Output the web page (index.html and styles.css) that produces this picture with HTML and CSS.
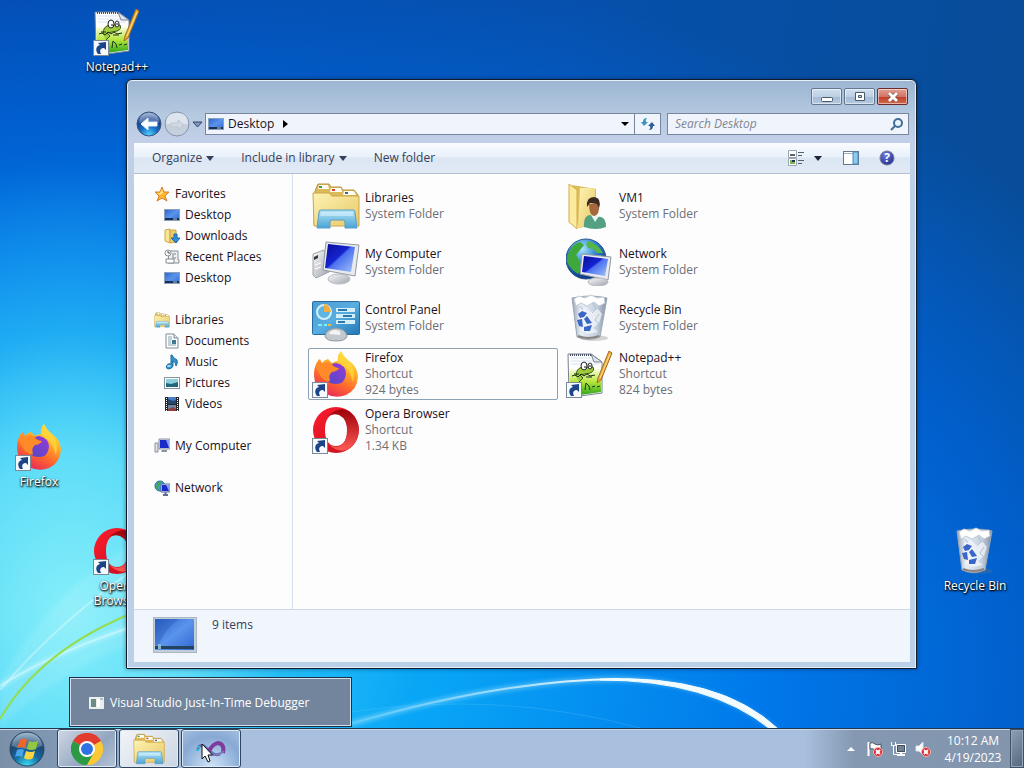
FILE: index.html
```html
<!DOCTYPE html>
<html lang="en">
<head>
    <meta charset="UTF-8">
    <meta name="viewport" content="width=device-width, initial-scale=1.0">
    <title>Desktop</title>
    <link rel="stylesheet" href="styles.css">
</head>
<body>
    <!-- shared icons -->
    <svg class="sprite" width="0" height="0" aria-hidden="true">
        <defs>
            <linearGradient id="g-folder" x1="0" y1="0" x2="1" y2="1">
                <stop offset="0" stop-color="#fdf3b4"/><stop offset="1" stop-color="#e8c864"/>
            </linearGradient>
            <linearGradient id="g-stand" x1="0" y1="0" x2="0" y2="1">
                <stop offset="0" stop-color="#b4e4f6"/><stop offset="1" stop-color="#4aa3d6"/>
            </linearGradient>
            <linearGradient id="g-screen" x1="0" y1="0" x2="1" y2="1">
                <stop offset="0" stop-color="#0a0a9c"/><stop offset=".45" stop-color="#1524cf"/><stop offset=".5" stop-color="#4b70ee"/><stop offset="1" stop-color="#a3c4fb"/>
            </linearGradient>
            <linearGradient id="g-blue" x1="0" y1="0" x2="1" y2="1">
                <stop offset="0" stop-color="#2c64c8"/><stop offset=".5" stop-color="#5a94ec"/><stop offset="1" stop-color="#2f68d0"/>
            </linearGradient>
            <linearGradient id="g-metal" x1="0" y1="0" x2="1" y2="1">
                <stop offset="0" stop-color="#fafafa"/><stop offset="1" stop-color="#9fa4ad"/>
            </linearGradient>
            <linearGradient id="g-panel" x1="0" y1="0" x2="1" y2="1">
                <stop offset="0" stop-color="#4a9bd2"/><stop offset=".5" stop-color="#58aee0"/><stop offset="1" stop-color="#2176b4"/>
            </linearGradient>
            <radialGradient id="g-globe" cx=".4" cy=".25" r=".8">
                <stop offset="0" stop-color="#a7e6fa"/><stop offset=".45" stop-color="#2f83d0"/><stop offset="1" stop-color="#0a2a78"/>
            </radialGradient>
            <linearGradient id="g-bin" x1="0" y1="0" x2="1" y2="0">
                <stop offset="0" stop-color="#9aa5b3"/><stop offset=".25" stop-color="#e6edf5"/><stop offset=".7" stop-color="#c3d0df"/><stop offset="1" stop-color="#8391a3"/>
            </linearGradient>
            <linearGradient id="g-fox" x1=".8" y1="0" x2=".3" y2="1">
                <stop offset="0" stop-color="#fff044"/><stop offset=".35" stop-color="#ffb02a"/><stop offset=".65" stop-color="#ff6a2c"/><stop offset="1" stop-color="#e8245c"/>
            </linearGradient>
            <linearGradient id="g-foxcore" x1="1" y1="0" x2="0" y2="1">
                <stop offset="0" stop-color="#9838d8"/><stop offset="1" stop-color="#4c4cc4"/>
            </linearGradient>
            <linearGradient id="g-opera" x1="0" y1="0" x2="1" y2="1">
                <stop offset="0" stop-color="#ff1b2d"/><stop offset="1" stop-color="#c0101f"/>
            </linearGradient>
            <linearGradient id="g-opera2" x1="0" y1="0" x2="0" y2="1">
                <stop offset="0" stop-color="#9c0009"/><stop offset="1" stop-color="#ff5a54"/>
            </linearGradient>
            <linearGradient id="g-grass" x1="0" y1="0" x2="0" y2="1">
                <stop offset="0" stop-color="#fbfde0"/><stop offset=".5" stop-color="#b4e63a"/><stop offset="1" stop-color="#2ca41c"/>
            </linearGradient>
            <radialGradient id="g-back" cx=".5" cy=".95" r=".9">
                <stop offset="0" stop-color="#4fd2ff"/><stop offset=".4" stop-color="#1a70c4"/><stop offset=".75" stop-color="#1a3f8c"/><stop offset="1" stop-color="#7d9cc8"/>
            </radialGradient>
            <radialGradient id="g-orb" cx=".5" cy="1" r="1">
                <stop offset="0" stop-color="#3fe0f8"/><stop offset=".4" stop-color="#15699f"/><stop offset=".7" stop-color="#1c4670"/><stop offset="1" stop-color="#86a9c6"/>
            </radialGradient>
            <radialGradient id="g-help" cx=".4" cy=".3" r=".8">
                <stop offset="0" stop-color="#6e7fe0"/><stop offset="1" stop-color="#1c2886"/>
            </radialGradient>
        </defs>

        <symbol id="i-arrow" viewBox="0 0 16 16">
            <rect x=".5" y=".5" width="15" height="15" fill="#f6f9fd" stroke="#7b8896"/>
            <path d="M5 14C2 10 3 6 7 5L5 3 13 2V10L11 8C8 8 6 10 8 14Z" fill="#1c4486"/>
        </symbol>

        <symbol id="i-libraries" viewBox="0 0 48 48">
            <path d="M3 9 6 2H17L19 5H29L31 8H42L46 13V43H2Z" fill="#dcb95a" stroke="#b8923a"/>
            <path d="M7 3H16L17 7H6ZM19 6H29L30 10H18ZM32 9H42L44 13H31Z" fill="#fffef4"/>
            <path d="M7 4H10V6H7Z" fill="#3e9c44"/><path d="M20 7H23V9H20Z" fill="#d8442c"/><path d="M33 10H36V12H33Z" fill="#34679c"/>
            <path d="M1 11H17L20 14H47V44H2Z" fill="url(#g-folder)" stroke="#cba64b"/>
            <path d="M7 30Q7 28 9 28H41Q43 28 43 30L45 46H33V40Q33 38 31 38H20Q18 38 18 40V46H5Z" fill="url(#g-stand)" stroke="#5a9ec4"/>
            <path d="M9 30H41V34H8Z" fill="#e4f8ff" opacity=".5"/>
        </symbol>

        <symbol id="i-user" viewBox="0 0 48 48">
            <path d="M6 3 30 7V43L12 46Z" fill="#e0bc58"/>
            <path d="M14 6 29 6V42L12 46Z" fill="url(#g-folder)"/>
            <path d="M3 2 11 8V47L3 40Z" fill="#fbeb9c" stroke="#d2ad4c"/>
            <path d="M18 45Q17 33 25 33L31 35Q40 33 40 45Q30 49 18 45Z" fill="#53a083"/>
            <path d="M25 33 29 40 33 34Z" fill="#e8f5ec"/>
            <path d="M23 22Q23 33 28 34 34 33 33 22Z" fill="#a4683c"/>
            <path d="M21 25Q20 15 28 15 36 16 33 26L31 22 24 21Z" fill="#3a2a20"/>
        </symbol>

        <symbol id="i-computer" viewBox="0 0 48 48">
            <path d="M1 16 12 12 17 34 4 40 1 37Z" fill="url(#g-metal)" stroke="#a0a5ad"/>
            <path d="M2 19 6 17V20L2 22Z" fill="#33373d"/><path d="M3 27 9 25M3 31 9 29" stroke="#fff"/>
            <path d="M14 4 47 7 43 38 11 32Z" fill="#e7eaee" stroke="#9298a2"/>
            <path d="M16 6 43 9 39 34 13 30Z" fill="url(#g-screen)"/>
            <path d="M24 36H32L33 40H22Z" fill="#b9bec6"/>
            <ellipse cx="27" cy="41" rx="11" ry="5" fill="url(#g-metal)" stroke="#b6bbc3"/>
        </symbol>

        <symbol id="i-network" viewBox="0 0 48 48">
            <circle cx="20" cy="21" r="20" fill="url(#g-globe)" stroke="#2c568e"/>
            <path d="M6 9Q9 5 14 4L18 7 14 12 10 17 13 22 16 30 12 36Q4 31 1 24 1 15 6 9Z" fill="#3fa83a"/>
            <path d="M23 3Q33 7 37 15L31 15 27 11 22 10 20 6Z" fill="#56b548"/>
            <path d="M16 16 45 19 42 42 14 36Z" fill="#e7eaee" stroke="#9298a2"/>
            <path d="M18 18 42 21 39 38 16 34Z" fill="url(#g-screen)"/>
            <ellipse cx="32" cy="44" rx="10" ry="4" fill="url(#g-metal)" stroke="#b6bbc3"/>
        </symbol>

        <symbol id="i-control" viewBox="0 0 48 48">
            <rect x=".5" y="7.500" width="47" height="33" rx="1" fill="url(#g-panel)" stroke="#2a6ca0"/>
            <circle cx="12" cy="18" r="7" fill="#5eb6e4" stroke="#d5f0fc" stroke-width="2"/>
            <path d="M12 18V10A8 8 0 0 1 19 18Z" fill="#f0ad42"/>
            <path d="M6 31H10M12 31H15" stroke="#7ff2ff" stroke-width="2"/><path d="M16 31H19" stroke="#f0b84f" stroke-width="2"/>
            <path d="M24 16H43M24 22H43M24 28H43" stroke="#d4effc" stroke-width="4"/>
            <path d="M26 16H35M31 22H40M26 28H33" stroke="#2b78ad" stroke-width="2"/>
            <path d="M13 42Q14 35 24 34 34 35 35 42 34 47 24 47 14 47 13 42Z" fill="#c3c9ce" stroke="#8e979e"/>
            <path d="M17 40Q18 36 24 36 30 37 28 41Z" fill="#f4f4f2"/>
        </symbol>

        <symbol id="i-bin" viewBox="0 0 48 48">
            <ellipse cx="28" cy="44" rx="14" ry="3" fill="#777" opacity=".3"/>
            <path d="M6 4 11 43Q22 48 34 43L41 4Q24 0 6 4Z" fill="url(#g-bin)" stroke="#9aa7b6"/>
            <path d="M8 5 13 2 19 4 25 1 31 4 38 3 39 9 33 12 28 8 21 12 15 9 10 12Z" fill="#fff" stroke="#c4ccd5"/>
            <path d="M13 16 20 13 25 18 32 15 36 20 33 29 27 34 32 38 22 40 14 36 18 31 12 27Z" fill="#f5f8fb" opacity=".7"/>
            <path d="M27 9 30 15 26 19M33 20 29 26 34 31M14 12 17 16" fill="none" stroke="#b4c0cf"/>
            <path d="M12 20 16 17 21 19 18 23 14 24ZM21 22 26 29 21 30 18 25ZM11 26 16 25 17 33 13 32ZM18 33 26 31 24 37 18 37Z" fill="#3a66c8"/>
            <path d="M12 42Q22 46 33 42" fill="none" stroke="#8a817c" stroke-width="2"/>
        </symbol>

        <symbol id="i-firefox" viewBox="0 0 48 48">
            <path d="M2 24Q2 16 7 9L10 13Q12 10 16 9L20 13Q23 11 26 11 25 5 29 1 31 6 36 10 46 17 46 27 45 40 34 45 24 49 14 44 2 38 2 24Z" fill="url(#g-fox)"/>
            <path d="M13 24Q14 14 24 13 34 15 34 24 33 34 24 34 14 34 13 24Z" fill="url(#g-foxcore)"/>
            <path d="M4 17 8 9 10 14Q16 11 20 14 21 17 27 18 26 21 20 22 16 25 18 31 12 32 8 25Z" fill="#ff8a28"/>
            <path d="M26 11Q30 3 29 1 32 8 38 13 44 20 41 32 37 17 30 15Z" fill="#ffd83c" opacity=".75"/>
        </symbol>

        <symbol id="i-notepad" viewBox="0 0 48 48">
            <path d="M2 4H25L36 12V43L14 46H3Z" fill="#fff" stroke="#778294"/>
            <path d="M5 8H25M5 11H28M5 14H33" stroke="#d5e2f0"/>
            <path d="M3 19H35V42L14 45H4Z" fill="url(#g-grass)"/>
            <path d="M4 5H25" stroke="#455062" stroke-width="2" stroke-dasharray="1 1"/>
            <path d="M25 4 28 12H36Z" fill="#dfe5ee" stroke="#778294"/>
            <path d="M10 26Q10 18 17 17L27 17Q29 21 24 23L14 25 17 28 13 32" fill="#a0cc3c" stroke="#33591a"/>
            <path d="M6 26 9 25 12 27 15 24 18 26 21 24 24 26 29 25M8 24 13 24M20 27H26" fill="none" stroke="#172d12"/>
            <ellipse cx="18" cy="16" rx="3" ry="4" fill="#fff" stroke="#222"/><ellipse cx="24" cy="16" rx="2" ry="3" fill="#fff" stroke="#222"/>
            <path d="M19 16V18M24 15V17" stroke="#111"/>
            <path d="M19 40 20 33 23 36 24 40M26 37 29 36M31 37 34 36" fill="none" stroke="#183b16"/>
            <path d="M46 3 43 1 32 28 31 33 35 30Z" fill="#e9ad3a" stroke="#a56c22"/>
            <path d="M44 4 34 28" stroke="#ffe18b"/>
        </symbol>

        <symbol id="i-opera" viewBox="0 0 48 48">
            <path d="M24 1A23 23 0 1 0 24 47A23 23 0 1 0 24 1ZM24 8C32 8 35 15 35 24S32 40 24 40 13 33 13 24 16 8 24 8Z" fill="url(#g-opera)" fill-rule="evenodd"/>
            <path d="M16 10Q28 -1 38 6A23 23 0 0 1 38 42Q28 49 16 38 30 46 35 30 37 14 27 9 21 7 16 10Z" fill="url(#g-opera2)"/>
        </symbol>

        <symbol id="i-desktop" viewBox="0 0 16 16">
            <rect x=".5" y="2.500" width="15" height="11" fill="url(#g-blue)" stroke="#8aa0bb"/>
            <path d="M1 11H15V13H1Z" fill="#1b3050"/><path d="M9 12H13" stroke="#a9c9e8"/>
        </symbol>

        <symbol id="i-star" viewBox="0 0 16 16">
            <path d="M8 1 10 6 15 6 11 10 13 15 8 12 3 15 5 10 1 6 6 6Z" fill="#ffb62c" stroke="#d97c28" stroke-linejoin="round"/>
            <path d="M8 3 9 7 6 9 3 7 6 7Z" fill="#ffe68c"/>
        </symbol>

        <symbol id="i-downloads" viewBox="0 0 16 16">
            <path d="M1 2 6 1V15L1 13Z" fill="#f8e596" stroke="#cfa947"/><path d="M6 2H12V14L6 15Z" fill="#ebcb68" stroke="#cfa947"/>
            <path d="M10 6H13V10H16L12 15 7 10H10Z" fill="#2f8de0" stroke="#1d66ac"/>
        </symbol>

        <symbol id="i-recent" viewBox="0 0 16 16">
            <path d="M5 2H14V11H15V14H4Z" fill="#f0f1f2" stroke="#858c92"/>
            <path d="M2 10H10V14H2Z" fill="#fff" stroke="#858c92"/>
            <path d="M8 5H12M8 7H10M8 9H12" stroke="#75818c"/>
            <circle cx="4" cy="4" r="3" fill="#fff" stroke="#8d949b"/><path d="M4 2V4H6" fill="none" stroke="#555"/>
        </symbol>

        <symbol id="i-document" viewBox="0 0 16 16">
            <path d="M2 1H10L14 5V15H2Z" fill="#fff" stroke="#7f8c94"/>
            <path d="M4 4H8M4 6H8M4 8H7M4 10H7M4 12H12" stroke="#89a0ad"/><path d="M8 7H12V11H8Z" fill="#3b7898"/><path d="M10 1V5H14" fill="#dce6ed" stroke="#7f8c94"/>
        </symbol>

        <symbol id="i-music" viewBox="0 0 16 16">
            <path d="M8 1Q9 4 13 6 14 9 12 12 12 8 9 7V12Q8 15 4 15 1 14 3 11 5 9 7 10V1Z" fill="#2f94cb" stroke="#1d6c9f"/>
            <ellipse cx="5" cy="12" rx="2" ry="1" fill="#a8e4f7"/>
        </symbol>

        <symbol id="i-picture" viewBox="0 0 16 16">
            <rect x=".5" y="2.500" width="15" height="11" fill="#fff" stroke="#8795a0"/>
            <path d="M2 4H14V12H2Z" fill="#8fd0dd"/><path d="M2 8 7 9 14 7V12H2Z" fill="#23677d"/>
        </symbol>

        <symbol id="i-video" viewBox="0 0 16 16">
            <path d="M1 1H15V15H1Z" fill="#23272c"/><path d="M4 1H12V8H4Z" fill="#467cc1"/><path d="M4 9H12V15H4Z" fill="#6a88a6"/>
            <path d="M4 3 9 5 12 4V8H4Z" fill="#26466a"/><path d="M4 13 9 11 12 13V15H4Z" fill="#8f3f3b"/>
            <path d="M2.500 2V15M13.500 2V15" stroke="#fff" stroke-dasharray="1 1"/>
        </symbol>

        <symbol id="i-pin-computer" viewBox="0 0 16 16">
            <path d="M1 5H4V14H1Z" fill="#dfe3e6" stroke="#8a9198"/><path d="M5 1H16V11H5Z" fill="#dfe3ea" stroke="#8990a0"/>
            <path d="M6 2H15V10H6Z" fill="#1a2ac8"/><path d="M12 2H15V10Z" fill="#7f9ef4"/><path d="M8 12H13V14H7Z" fill="#8e949c"/>
        </symbol>

        <symbol id="i-pin-network" viewBox="0 0 16 16">
            <circle cx="6" cy="6" r="5" fill="#3f9ad9" stroke="#28679e"/><path d="M3 3 7 1 6 5 4 7 6 10 2 8Z" fill="#43ab46"/>
            <path d="M7 4H16V12H7Z" fill="#dce1ea" stroke="#5e6c9f"/><path d="M8 5H15V11H8Z" fill="#1a2ac8"/><path d="M12 5H15V11Z" fill="#7f9ef4"/><path d="M9 15H14M11.500 12V14" stroke="#5c6f91" stroke-width="2"/>
        </symbol>

        <symbol id="i-chrome" viewBox="0 0 32 32">
            <path d="M16 16 2.100 8A16 16 0 0 1 29.900 8Z" fill="#e33b2e"/>
            <path d="M16 16 29.900 8A16 16 0 0 1 16 32Z" fill="#fcc934"/>
            <path d="M16 16V32A16 16 0 0 1 2.100 8Z" fill="#2c9a45"/>
            <path d="M16 8H29.900Q28 5 25 3 20 0 16 0Z" fill="#e33b2e"/>
            <path d="M23 20 16 32Q11 32 9 30L16 20Z" fill="#2c9a45"/><path d="M23 20 16 32Q22 32 25 29L27 16Z" fill="#fcc934"/>
            <circle cx="16" cy="16" r="8" fill="#fff"/><circle cx="16" cy="16" r="6" fill="#2f72e6"/>
        </symbol>
    </svg>

    <main class="desktop">
        <svg class="wallpaper" viewBox="0 0 1024 728" preserveAspectRatio="none" aria-hidden="true">
            <defs>
                <filter id="soft"><feGaussianBlur stdDeviation="2"/></filter>
                <linearGradient id="g-swoosh" x1="0" x2="1">
                    <stop offset="0" stop-color="#fff" stop-opacity=".1"/><stop offset=".6" stop-color="#e8fbff" stop-opacity=".6"/><stop offset="1" stop-color="#fff"/>
                </linearGradient>
            </defs>
            <path d="M0 682Q50 590 140 540L140 640Q60 670 0 728Z" fill="#fff" opacity=".1" filter="url(#soft)"/>
            <path d="M0 690Q60 620 140 565" fill="none" stroke="#fff" stroke-width="2" opacity=".35"/>
            <path d="M0 686Q60 648 160 618" fill="none" stroke="#d9fbff" stroke-width="4" opacity=".5" filter="url(#soft)"/>
            <path d="M0 686Q60 648 160 618" fill="none" stroke="#d9fbff" stroke-width="2" opacity=".5"/>
            <path d="M0 719Q40 650 135 612" fill="none" stroke="#95dc4e" stroke-width="2"/>
            <path d="M350 724Q500 680 620 679 720 682 778 732" fill="none" stroke="#bff0ff" stroke-width="5" opacity=".4" filter="url(#soft)"/>
            <path d="M350 724Q500 680 620 679" fill="none" stroke="url(#g-swoosh)" stroke-width="2"/>
            <path d="M600 679Q720 674 778 729L770 729Q710 680 600 680Z" fill="#f2fcff" stroke="#f2fcff"/>
            <path d="M350 712Q500 690 640 728" fill="none" stroke="#7fd6ff" opacity=".2"/>
        </svg>

        <a class="shortcut shortcut-notepad" href="#">
            <span class="pic"><svg><use href="#i-notepad"/></svg><svg class="link"><use href="#i-arrow"/></svg></span>
            <span class="shortcut-label">Notepad++</span>
        </a>
        <a class="shortcut shortcut-firefox" href="#">
            <span class="pic"><svg><use href="#i-firefox"/></svg><svg class="link"><use href="#i-arrow"/></svg></span>
            <span class="shortcut-label">Firefox</span>
        </a>
        <a class="shortcut shortcut-opera" href="#">
            <span class="pic"><svg><use href="#i-opera"/></svg><svg class="link"><use href="#i-arrow"/></svg></span>
            <span class="shortcut-label">Opera Browser</span>
        </a>
        <a class="shortcut shortcut-bin" href="#">
            <span class="pic"><svg><use href="#i-bin"/></svg></span>
            <span class="shortcut-label">Recycle Bin</span>
        </a>

        <section class="window" aria-label="Desktop">
            <div class="caption">
                <button class="caption-button" aria-label="Minimize"><svg width="14" height="10"><rect x="1.500" y="5.500" width="11" height="4" rx="1" fill="#fff" stroke="#4a586c"/></svg></button>
                <button class="caption-button" aria-label="Maximize"><svg width="12" height="10"><path d="M1.500.500H10.500V8.500H1.500ZM4.500 3.500V5.500H7.500V3.500Z" fill="#fff" fill-rule="evenodd" stroke="#4a586c"/></svg></button>
                <button class="caption-button close" aria-label="Close"><svg width="14" height="10"><path d="M3 1 11 9M11 1 3 9" stroke="#6a4040" stroke-width="4"/><path d="M3 1 11 9M11 1 3 9" stroke="#fff" stroke-width="3"/></svg></button>
            </div>

            <div class="address-row">
                <div class="travel">
                    <button class="round" aria-label="Back"><svg viewBox="0 0 26 26"><circle cx="13" cy="13" r="12" fill="url(#g-back)" stroke="#3c5478"/><path d="M3 12Q3 3 13 2 23 3 23 12 13 8 3 12Z" fill="#fff" opacity=".3"/><path d="M5 13 12 7V11H21V15H12V19Z" fill="#fff" stroke="#dff1ff"/></svg></button>
                    <button class="round" aria-label="Forward"><svg viewBox="0 0 26 26"><circle cx="13" cy="13" r="12" fill="#c6d0dd" stroke="#8593a8"/><path d="M2 13Q2 2 13 2 24 2 24 13Z" fill="#dde4ed"/><path d="M20 14 14 9V12H7V16H14V19Z" fill="#d0d8e2" stroke="#bcc6d2"/></svg></button>
                    <button class="recent" aria-label="Recent pages"><svg width="11" height="7"><path d="M1 1H10L5.500 6Z" fill="#7d97b9" stroke="#34496c"/></svg></button>
                </div>
                <div class="address">
                    <svg class="small"><use href="#i-desktop"/></svg>
                    <a class="crumb" href="#">Desktop</a>
                    <svg width="5" height="8"><path d="M0 0 5 4 0 8Z" fill="#000"/></svg>
                    <button class="history" aria-label="Previous locations"><svg width="8" height="4"><path d="M0 0H8L4 4Z" fill="#000"/></svg></button>
                </div>
                <button class="refresh" aria-label="Refresh"><svg width="16" height="16"><path d="M7 2Q3 2 3 6H1L4 10 8 6H6Q5 4 7 2Z" fill="#3c93c0"/><path d="M9 14Q13 14 13 10H15L12 6 8 10H10Q11 12 9 14Z" fill="#2d5f94"/></svg></button>
                <div class="search">
                    <input type="text" aria-label="Search Desktop" placeholder="Search Desktop">
                    <svg width="13" height="13"><circle cx="8" cy="5" r="4" fill="#eaf4fc" stroke="#3f6d96" stroke-width="2"/><path d="M5 8 1 12" stroke="#3f6d96" stroke-width="2"/></svg>
                </div>
            </div>

            <div class="client">
                <div class="commands">
                    <button class="command">Organize <svg width="8" height="5"><path d="M0 0H8L4 5Z" fill="#36405a"/></svg></button>
                    <button class="command">Include in library <svg width="8" height="5"><path d="M0 0H8L4 5Z" fill="#36405a"/></svg></button>
                    <button class="command">New folder</button>
                    <div class="tools">
                        <button class="tool" aria-label="Change your view"><svg width="16" height="16"><path d="M.500.500H8.500V7.500H.500ZM.500 8.500H8.500V15.500H.500Z" fill="#fff" stroke="#9aa5b1"/><path d="M2 5H7" stroke="#576570" stroke-width="2"/><path d="M2 10H7V14H2Z" fill="#7db356"/><path d="M4 11H7" stroke="#20324e" stroke-width="2"/><path d="M10 2.500H16M10 5.500H14M10 10.500H16M10 13.500H14" stroke="#4f6273"/></svg></button>
                        <button class="tool more" aria-label="More options"><svg width="8" height="5"><path d="M0 0H8L4 5Z" fill="#1c2638"/></svg></button>
                        <button class="tool preview" aria-label="Preview pane"><svg width="16" height="14"><rect x=".5" y=".5" width="15" height="13" fill="#fff" stroke="#63788d"/><path d="M1 2.500H10" stroke="#9fb2c3"/><path d="M10 1H15V13H10Z" fill="#8ccaf0" stroke="#4b86b6"/></svg></button>
                        <button class="tool help" aria-label="Help"><svg width="16" height="16"><circle cx="8" cy="8" r="7" fill="url(#g-help)" stroke="#767e9c"/><text x="8" y="12" text-anchor="middle">?</text></svg></button>
                    </div>
                </div>

                <div class="panes">
                    <nav class="tree" aria-label="Navigation pane">
                        <ul>
                            <li><a href="#"><svg class="small"><use href="#i-star"/></svg>Favorites</a>
                                <ul>
                                    <li><a href="#"><svg class="small"><use href="#i-desktop"/></svg>Desktop</a></li>
                                    <li><a href="#"><svg class="small"><use href="#i-downloads"/></svg>Downloads</a></li>
                                    <li><a href="#"><svg class="small"><use href="#i-recent"/></svg>Recent Places</a></li>
                                    <li><a href="#"><svg class="small"><use href="#i-desktop"/></svg>Desktop</a></li>
                                </ul>
                            </li>
                            <li><a href="#"><svg class="small"><use href="#i-libraries"/></svg>Libraries</a>
                                <ul>
                                    <li><a href="#"><svg class="small"><use href="#i-document"/></svg>Documents</a></li>
                                    <li><a href="#"><svg class="small"><use href="#i-music"/></svg>Music</a></li>
                                    <li><a href="#"><svg class="small"><use href="#i-picture"/></svg>Pictures</a></li>
                                    <li><a href="#"><svg class="small"><use href="#i-video"/></svg>Videos</a></li>
                                </ul>
                            </li>
                            <li><a href="#"><svg class="small"><use href="#i-pin-computer"/></svg>My Computer</a></li>
                            <li><a href="#"><svg class="small"><use href="#i-pin-network"/></svg>Network</a></li>
                        </ul>
                    </nav>

                    <div class="files">
                        <a class="file" href="#"><span class="pic"><svg><use href="#i-libraries"/></svg></span><span class="info"><b>Libraries</b><span>System Folder</span></span></a>
                        <a class="file" href="#"><span class="pic"><svg><use href="#i-user"/></svg></span><span class="info"><b>VM1</b><span>System Folder</span></span></a>
                        <a class="file" href="#"><span class="pic"><svg><use href="#i-computer"/></svg></span><span class="info"><b>My Computer</b><span>System Folder</span></span></a>
                        <a class="file" href="#"><span class="pic"><svg><use href="#i-network"/></svg></span><span class="info"><b>Network</b><span>System Folder</span></span></a>
                        <a class="file" href="#"><span class="pic"><svg><use href="#i-control"/></svg></span><span class="info"><b>Control Panel</b><span>System Folder</span></span></a>
                        <a class="file" href="#"><span class="pic"><svg><use href="#i-bin"/></svg></span><span class="info"><b>Recycle Bin</b><span>System Folder</span></span></a>
                        <a class="file focused" href="#"><span class="pic"><svg><use href="#i-firefox"/></svg><svg class="link"><use href="#i-arrow"/></svg></span><span class="info"><b>Firefox</b><span>Shortcut</span><span>924 bytes</span></span></a>
                        <a class="file" href="#"><span class="pic"><svg><use href="#i-notepad"/></svg><svg class="link"><use href="#i-arrow"/></svg></span><span class="info"><b>Notepad++</b><span>Shortcut</span><span>824 bytes</span></span></a>
                        <a class="file" href="#"><span class="pic"><svg><use href="#i-opera"/></svg><svg class="link"><use href="#i-arrow"/></svg></span><span class="info"><b>Opera Browser</b><span>Shortcut</span><span>1.34 KB</span></span></a>
                    </div>
                </div>

                <div class="details">
                    <svg width="44" height="36"><rect x=".5" y=".5" width="43" height="35" fill="#c3ced8" stroke="#aab8c6"/><path d="M2 2H41V33H2Z" fill="url(#g-blue)"/><path d="M2 2H26Q10 14 6 28H2Z" fill="#16419e" opacity=".25"/><path d="M2 29H41V32H2Z" fill="#24435f"/><path d="M5 27H8V32H5Z" fill="#8db4ce"/></svg>
                    <span>9 items</span>
                </div>
            </div>
        </section>

        <div class="task-preview">
            <svg width="15" height="12"><rect width="15" height="12" fill="#e9efee"/><path d="M2 2H7V10H2Z" fill="#6b8d86"/><path d="M8 2H11V10H8Z" fill="#fff"/><path d="M11 1H14V3H11Z" fill="#b3bfc4"/></svg>
            <span>Visual Studio Just-In-Time Debugger</span>
        </div>
    </main>

    <footer class="taskbar">
        <button class="start" aria-label="Start">
            <svg viewBox="0 0 36 36">
                <circle cx="18" cy="18" r="17" fill="url(#g-orb)" stroke="#2b4560"/>
                <path d="M3 15Q5 2 18 2 31 2 33 15 18 21 3 15Z" fill="#fff" opacity=".25"/>
                <path d="M11 9Q15 6 18 9L16 17Q12 15 8 17Z" fill="#f0652a"/>
                <path d="M20 10Q24 12 29 10L27 18Q22 20 18 18Z" fill="#93c83e"/>
                <path d="M8 19Q12 17 15 19L13 26Q9 24 6 26Z" fill="#4aa4ea"/>
                <path d="M17 20Q22 22 26 20L24 27Q20 30 15 27Z" fill="#fdd544"/>
            </svg>
        </button>
        <button class="task" aria-label="Google Chrome"><svg width="32" height="32"><use href="#i-chrome"/></svg></button>
        <button class="task open" aria-label="Windows Explorer"><svg width="34" height="32"><use href="#i-libraries"/></svg></button>
        <button class="task hot" aria-label="Visual Studio Just-In-Time Debugger">
            <svg width="32" height="32" viewBox="0 0 32 32"><path d="M3 16Q4 11 9 13L16 19Q20 23 25 21" fill="none" stroke="#5976b8" stroke-width="3"/><path d="M13 20Q17 11 23 10 30 11 28 20" fill="none" stroke="#7e3d9c" stroke-width="4"/><path d="M13 20Q20 25 29 18" fill="none" stroke="#7c76bc" stroke-width="2"/><path d="M2 14H5M1 17H4" stroke="#2fb8d5" stroke-width="2"/></svg>
        </button>
        <div class="tray">
            <button class="tray-button up" aria-label="Show hidden icons"><svg width="8" height="4"><path d="M0 4 4 0 8 4Z" fill="#fff"/></svg></button>
            <button class="tray-button" aria-label="Action Center"><svg width="16" height="16"><path d="M1.500 1V15" stroke="#fff" stroke-width="2"/><path d="M3 2Q6 1 8 3 11 5 14 3V9Q11 11 8 9 6 7 3 8Z" fill="#fff" stroke="#4b5868"/><circle cx="11" cy="11" r="4.500" fill="#d8262c" stroke="#f1b6b4"/><path d="M9 9 13 13M13 9 9 13" stroke="#fff" stroke-width="2"/></svg></button>
            <button class="tray-button" aria-label="Network"><svg width="16" height="16"><path d="M5.500 3.500H14.500V11.500H5.500Z" fill="#6f8092" stroke="#fff"/><path d="M6.500 4.500H13.500V10.500H6.500Z" fill="none" stroke="#3f4f61"/><path d="M6 14H14M10 12V14" stroke="#fff" stroke-width="2"/><path d="M.500 1V4.500H4.500V1M2.500 4V13.500H6" fill="none" stroke="#fff"/></svg></button>
            <button class="tray-button" aria-label="Volume muted"><svg width="16" height="16"><path d="M1 5H4L8 1V14L4 10H1Z" fill="#fff" stroke="#dbe2ea"/><circle cx="11" cy="11" r="4.500" fill="#d8262c" stroke="#f1b6b4"/><path d="M9 9 13 13M13 9 9 13" stroke="#fff" stroke-width="2"/></svg></button>
            <time class="clock" datetime="2023-04-19T10:12">10:12 AM<br>4/19/2023</time>
        </div>
        <button class="peek" aria-label="Show desktop"></button>
    </footer>

    <svg class="pointer" width="13" height="20" aria-hidden="true"><path d="M1 1V16L4 13 7 19 9 18 7 12H11.500Z" fill="#fff" stroke="#111"/></svg>
</body>
</html>
```

FILE: styles.css
```css
:root {
    --text: #1a1020;
    --muted: #6f6f73;
    --command: #36405a;
    --glass: #bacfe8;
}

* {
    box-sizing: border-box;
}

body {
    margin: 0;
    height: 100vh;
    display: flex;
    flex-direction: column;
    overflow: hidden;
    font-family: "Open Sans", "Noto Sans", sans-serif;
    font-size: 12px;
    line-height: 16px;
    color: var(--text);
}

button {
    padding: 0;
    border: 0;
    background: none;
    font: inherit;
    color: inherit;
    display: flex;
    align-items: center;
    justify-content: center;
}

a {
    color: inherit;
    text-decoration: none;
}

svg {
    display: block;
    flex: none;
}

.sprite {
    position: absolute;
}

.small {
    width: 16px;
    height: 16px;
}

.pic {
    position: relative;
    flex: none;
    width: 48px;
    height: 48px;
}

.pic svg {
    width: 48px;
    height: 48px;
}

.pic .link {
    position: absolute;
    left: 0;
    bottom: 0;
    width: 16px;
    height: 16px;
}

/* desktop */

.desktop {
    position: relative;
    flex: 1;
    min-height: 0;
    background:
        radial-gradient(ellipse 34% 62% at 7% 84%, #86effa 0%, #5edcf8 35%, rgba(50, 198, 246, 0.6) 62%, rgba(20, 150, 240, 0) 100%),
        radial-gradient(ellipse 120% 100% at 10% 92%, #14b8f8 0%, #08a4f6 28%, #0078ea 54%, rgba(0, 98, 212, 0.85) 76%, rgba(0, 88, 196, 0) 100%),
        linear-gradient(100deg, #0448ac 0%, #0650ac 50%, #084c94 100%);
    background-color: #0454b4;
}

.wallpaper {
    position: absolute;
    width: 100%;
    height: 100%;
}

.shortcut {
    position: absolute;
    width: 74px;
    display: flex;
    flex-direction: column;
    align-items: center;
    gap: 3px;
    color: #fff;
    line-height: 15px;
    text-align: center;
    text-shadow: 0 1px 2px #000, 1px 1px 2px #000;
}

.shortcut-notepad {
    left: 80px;
    top: 8px;
}

.shortcut-firefox {
    left: 2px;
    top: 423px;
}

.shortcut-opera {
    left: 80px;
    top: 527px;
}

.shortcut-bin {
    right: 12px;
    top: 527px;
}

/* explorer window */

.window {
    position: absolute;
    left: 126px;
    right: 107px;
    top: 79px;
    bottom: 59px;
    padding: 8px 6px 6px 7px;
    display: flex;
    flex-direction: column;
    gap: 8px;
    border: 1px solid #101c2c;
    border-radius: 6px 6px 1px 1px;
    background: linear-gradient(#9bb5d1 0, #b4c9e0 34px, #c3cfe8 60px, var(--glass) 130px);
    box-shadow: inset 0 0 0 1px #e4f0fa, 0 0 4px rgba(0, 20, 60, 0.5);
}

.caption {
    display: flex;
    justify-content: flex-end;
    gap: 2px;
    padding-right: 2px;
}

.caption-button {
    width: 31px;
    height: 17px;
    border: 1px solid #63778f;
    border-radius: 2px;
    background: linear-gradient(#d0dfef 0, #bccfe4 50%, #a3bad4 50%, #b5cae0 100%);
    box-shadow: inset 0 0 0 1px rgba(255, 255, 255, 0.5);
}

.caption-button.close {
    border-color: #6b2b27;
    background: linear-gradient(#e3a092 0, #d37464 50%, #bd3d27 50%, #cf6a4c 100%);
}

.address-row {
    display: flex;
    height: 22px;
    padding: 0 1px 0 2px;
}

.travel {
    display: flex;
    align-items: center;
    gap: 2px;
    width: 69px;
}

.round svg {
    width: 26px;
    height: 26px;
}

.address,
.refresh,
.search {
    border: 1px solid #77869c;
    background: #f0f4fc;
}

.address {
    flex: 1;
    display: flex;
    align-items: center;
    padding-left: 2px;
}

.crumb {
    margin: 0 9px 0 4px;
}

.history {
    margin-left: auto;
    width: 19px;
    height: 20px;
}

.refresh {
    width: 26px;
    border-left: 0;
}

.search {
    flex: 0 0 242px;
    display: flex;
    align-items: center;
    margin-left: 6px;
    padding: 0 5px 0 7px;
}

.search input {
    flex: 1;
    min-width: 0;
    padding: 0;
    border: 0;
    outline: 0;
    background: none;
    font: inherit;
}

.search input::placeholder {
    color: #808692;
    font-style: italic;
}

.client {
    flex: 1;
    min-height: 0;
    display: flex;
    flex-direction: column;
    background: #fdfdfe;
}

.commands {
    display: flex;
    align-items: center;
    height: 31px;
    padding: 0 15px 0 18px;
    gap: 27px;
    border-bottom: 1px solid #b3c1d4;
    background: linear-gradient(#fafcff 0, #e9f1fa 45%, #dce6f3 50%, #e1e9f5 100%);
    color: var(--command);
}

.command {
    gap: 4px;
}

.tools {
    display: flex;
    align-items: center;
    margin-left: auto;
}

.more {
    margin: 0 21px 0 10px;
}

.preview {
    margin-right: 20px;
}

.help text {
    fill: #fff;
    font-size: 12px;
    font-weight: bold;
}

.panes {
    flex: 1;
    min-height: 0;
    display: flex;
}

.tree {
    flex: 0 0 159px;
    padding: 9px 0 0 20px;
    border-right: 1px solid #d5dfee;
}

.tree ul {
    margin: 0;
    padding: 0;
    list-style: none;
}

.tree > ul {
    display: flex;
    flex-direction: column;
    gap: 21px;
}

.tree ul ul {
    padding-left: 10px;
}

.tree a {
    display: flex;
    align-items: center;
    gap: 5px;
    height: 21px;
}

.files {
    flex: 1;
    display: grid;
    grid-template-columns: repeat(auto-fill, 250px);
    grid-auto-rows: 52px;
    align-content: start;
    gap: 4px;
    padding: 6px 0 0 15px;
}

.file {
    display: flex;
    align-items: center;
    gap: 5px;
    padding: 0 3px;
    border: 1px solid transparent;
    border-radius: 2px;
}

.file.focused {
    border-color: #8ba2b4;
}

.info {
    display: flex;
    flex-direction: column;
    color: var(--muted);
}

.info b {
    font-weight: normal;
    color: var(--text);
}

.details {
    display: flex;
    gap: 15px;
    height: 53px;
    padding: 7px 19px;
    border-top: 1px solid #ccd9e8;
    background: #f1f5fc;
    color: var(--command);
}

/* hover preview above the taskbar */

.task-preview {
    position: absolute;
    left: 69px;
    bottom: 1px;
    width: 283px;
    height: 50px;
    display: flex;
    align-items: center;
    gap: 6px;
    padding: 2px 0 0 19px;
    border: 1px solid #1d3048;
    background: #73859d;
    box-shadow: inset 0 0 0 1px #d3dfea;
    color: #fff;
}

/* taskbar */

.taskbar {
    display: flex;
    height: 40px;
    border-top: 1px solid #23384f;
    background: linear-gradient(90deg, #7b8fa8 0, #8098b4 56px, #a8c0de 180px, #a8c0de calc(100% - 220px), #8498b2 calc(100% - 170px), #8295ac 100%);
    box-shadow: inset 0 1px #c8d8e9;
}

.start {
    width: 54px;
    margin-right: 3px;
}

.start svg {
    width: 36px;
    height: 36px;
}

.task {
    width: 60px;
    margin-right: 2px;
    border: 1px solid #30445e;
    border-radius: 3px;
    background: linear-gradient(135deg, #cdd7e4, #93a6c0 60%, #b3c3d8);
    box-shadow: inset 0 0 0 1px #e1eaf3;
}

.task.open {
    background: linear-gradient(135deg, #f2f5f9, #cbd5e3);
}

.task.hot {
    background: radial-gradient(circle at 50% 100%, #d0e4f8, #87a9d4 65%, #a7bfdf);
}

.tray {
    display: flex;
    align-items: center;
    gap: 8px;
    margin-left: auto;
    color: #fff;
}

.up {
    margin-right: 4px;
}

.clock {
    width: 64px;
    margin-left: 2px;
    text-align: center;
    line-height: 17px;
}

.peek {
    width: 14px;
    margin-left: 5px;
    border: 1px solid #3f5166;
    background: linear-gradient(135deg, #8c9eb2, #55687e);
    box-shadow: inset 0 0 0 1px #94a5b8;
}

.pointer {
    position: absolute;
    left: 201px;
    top: 743px;
    pointer-events: none;
}
```
